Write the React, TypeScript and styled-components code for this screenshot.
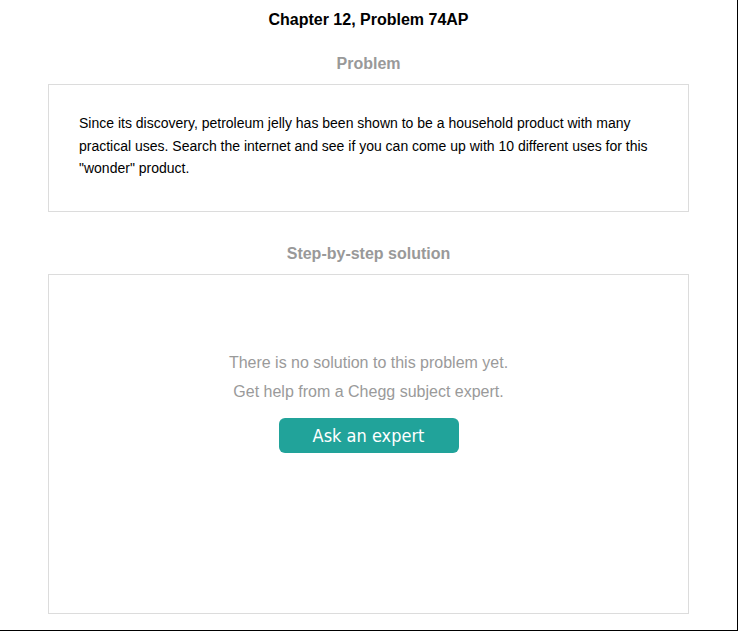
import React from "react";
import styled, { createGlobalStyle } from "styled-components";

const Global = createGlobalStyle`
  html, body { margin: 0; padding: 0; background: #fff; }
  body { font-family: "Liberation Sans", Arial, sans-serif; }
`;

const Frame = styled.div`
  box-sizing: border-box;
  width: 738px;
  height: 631px;
  border-right: 1px solid #000;
  border-bottom: 1px solid #000;
  background: #fff;
  display: flex;
  flex-direction: column;
  align-items: center;
  padding-top: 10px;
  overflow: hidden;
`;

const Title = styled.h1`
  margin: 0;
  font-size: 16px;
  line-height: 20px;
  font-weight: bold;
  color: #000;
  text-align: center;
`;

const SectionHeading = styled.h2<{ $top: number }>`
  margin: ${(p) => p.$top}px 0 10px;
  font-size: 16px;
  line-height: 20px;
  font-weight: bold;
  color: #999;
  text-align: center;
`;

const Card = styled.section<{ $height: number }>`
  box-sizing: border-box;
  width: 641px;
  height: ${(p) => p.$height}px;
  border: 1px solid #dcdcdc;
`;

const ProblemText = styled.p`
  margin: 0;
  padding: 27px 30px 0;
  font-size: 14px;
  line-height: 22.5px;
  color: #000;
`;

const Empty = styled.div`
  display: flex;
  flex-direction: column;
  align-items: center;
  padding-top: 73px;
`;

const EmptyLine = styled.p`
  margin: 0;
  font-size: 16px;
  line-height: 29px;
  color: #9a9a9a;
  text-align: center;
`;

const AskButton = styled.button`
  margin-top: 12px;
  width: 180px;
  height: 35px;
  border: none;
  border-radius: 6px;
  background: #21a39a;
  color: #fff;
  font-family: "DejaVu Sans Condensed", "DejaVu Sans", sans-serif;
  font-size: 18px;
  line-height: 35px;
  padding: 0;
  cursor: pointer;
`;

export default function App() {
  return (
    <>
      <Global />
      <Frame>
        <Title>Chapter 12, Problem 74AP</Title>
        <SectionHeading $top={24}>Problem</SectionHeading>
        <Card $height={128}>
          <ProblemText>
            Since its discovery, petroleum jelly has been shown to be a household product with many
            practical uses. Search the internet and see if you can come up with 10 different uses for this
            "wonder" product.
          </ProblemText>
        </Card>
        <SectionHeading $top={32}>Step-by-step solution</SectionHeading>
        <Card $height={340}>
          <Empty>
            <EmptyLine>There is no solution to this problem yet.</EmptyLine>
            <EmptyLine>Get help from a Chegg subject expert.</EmptyLine>
            <AskButton>Ask an expert</AskButton>
          </Empty>
        </Card>
      </Frame>
    </>
  );
}
